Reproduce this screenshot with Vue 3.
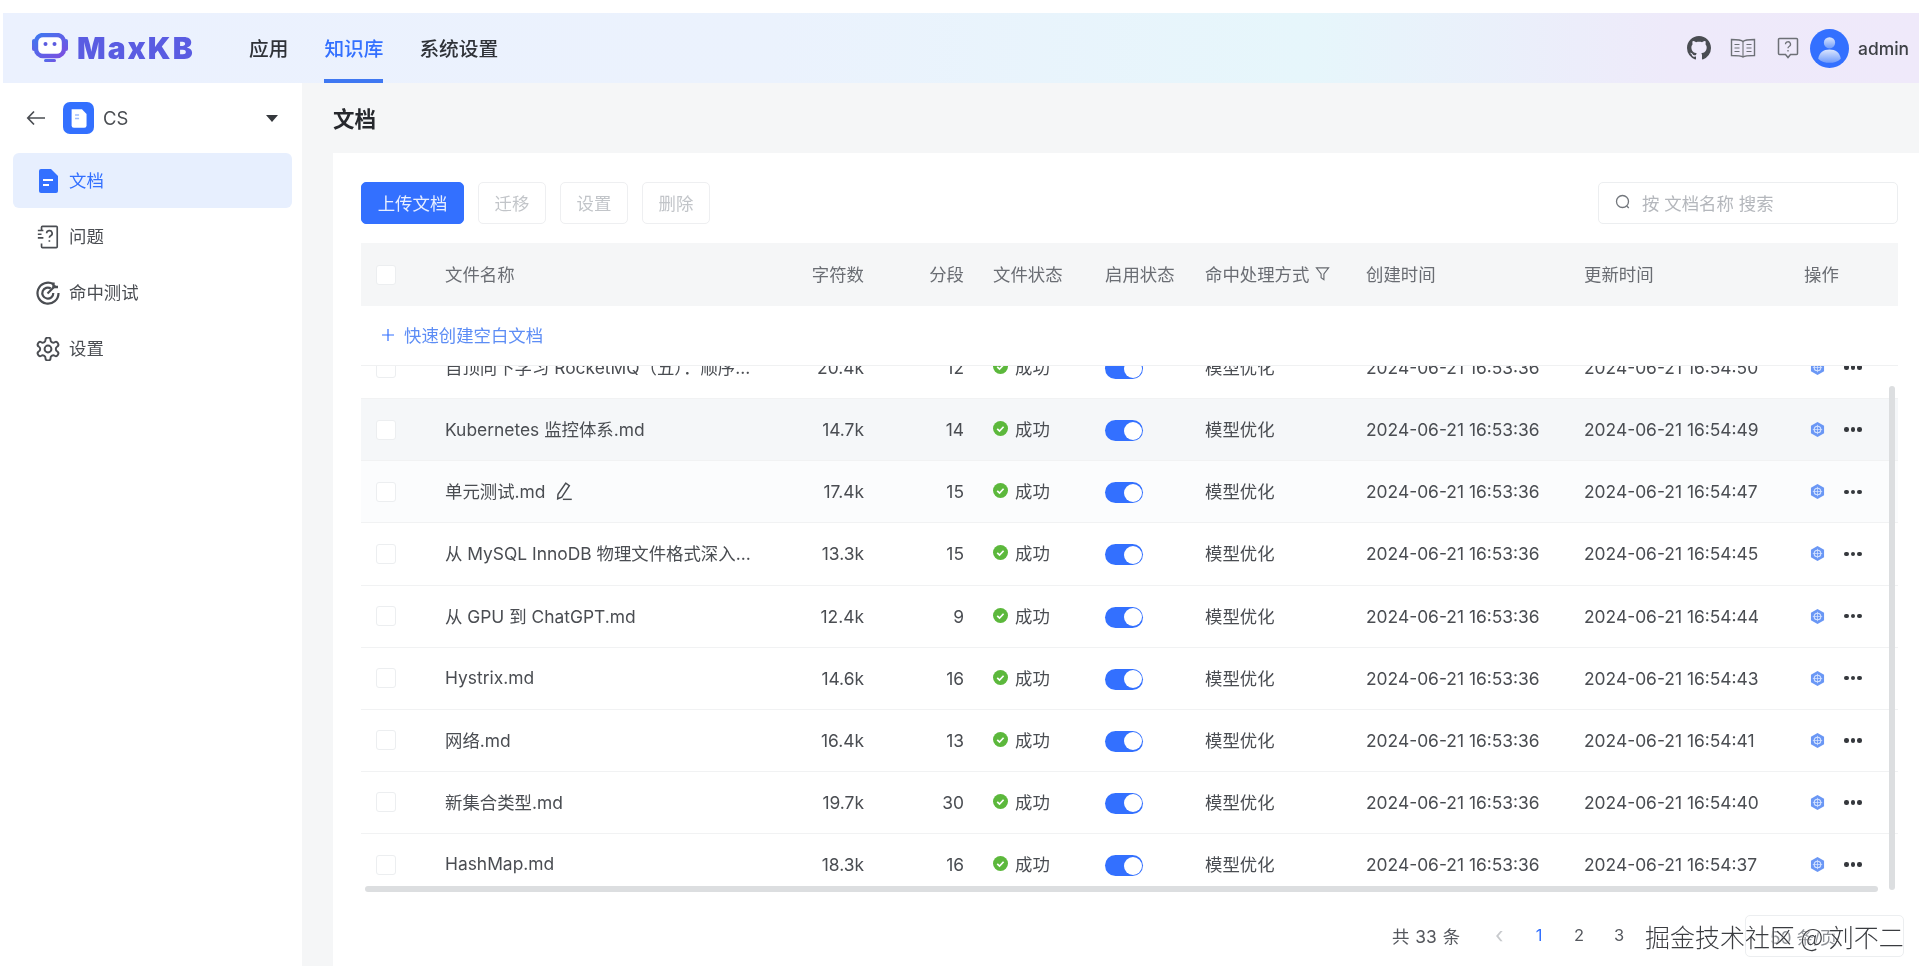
<script setup>
const rows = [
  { name: '自顶向下学习 RocketMQ（五）：顺序消息.md', chars: '20.4k', seg: 12, updated: '2024-06-21 16:54:50' },
  { name: 'Kubernetes 监控体系.md', chars: '14.7k', seg: 14, updated: '2024-06-21 16:54:49', hover: true },
  { name: '单元测试.md', chars: '17.4k', seg: 15, updated: '2024-06-21 16:54:47', edit: true, soft: true },
  { name: '从 MySQL InnoDB 物理文件格式深入理解索引.md', chars: '13.3k', seg: 15, updated: '2024-06-21 16:54:45' },
  { name: '从 GPU 到 ChatGPT.md', chars: '12.4k', seg: 9, updated: '2024-06-21 16:54:44' },
  { name: 'Hystrix.md', chars: '14.6k', seg: 16, updated: '2024-06-21 16:54:43' },
  { name: '网络.md', chars: '16.4k', seg: 13, updated: '2024-06-21 16:54:41' },
  { name: '新集合类型.md', chars: '19.7k', seg: 30, updated: '2024-06-21 16:54:40' },
  { name: 'HashMap.md', chars: '18.3k', seg: 16, updated: '2024-06-21 16:54:37' }
]
</script>

<template>
  <div class="page">
    <header class="topbar">
      <div class="brand">
        <svg class="logo" viewBox="0 0 38 30" fill="none">
          <defs>
            <linearGradient id="lg" x1="0" y1="0" x2="1" y2="1">
              <stop offset="0" stop-color="#3f78f0" />
              <stop offset="1" stop-color="#7a4fe0" />
            </linearGradient>
          </defs>
          <rect x="1" y="6" width="4" height="12" rx="2" fill="url(#lg)" />
          <rect x="33" y="6" width="4" height="12" rx="2" fill="url(#lg)" />
          <rect x="5" y="2" width="28" height="21" rx="7" stroke="url(#lg)" stroke-width="4.4" fill="#fff" />
          <circle cx="14.5" cy="11" r="2" fill="#5b5be0" />
          <circle cx="23.5" cy="11" r="2" fill="#5b5be0" />
          <rect x="13" y="26" width="12" height="3" rx="1.5" fill="url(#lg)" />
        </svg>
        <span class="brand-name">MaxKB</span>
      </div>
      <nav class="nav">
        <a class="nav-item">应用</a>
        <a class="nav-item active">知识库</a>
        <a class="nav-item">系统设置</a>
      </nav>
      <div class="top-right">
        <svg class="ic-github" viewBox="0 0 16 16" fill="#4a4d52">
          <path d="M8 0c4.42 0 8 3.58 8 8a8.013 8.013 0 0 1-5.45 7.59c-.4.08-.55-.17-.55-.38 0-.27.01-1.13.01-2.2 0-.75-.25-1.23-.54-1.48 1.78-.2 3.65-.88 3.65-3.95 0-.88-.31-1.59-.82-2.15.08-.2.36-1.02-.08-2.12 0 0-.67-.22-2.2.82-.64-.18-1.32-.27-2-.27-.68 0-1.36.09-2 .27-1.53-1.03-2.2-.82-2.2-.82-.44 1.1-.16 1.92-.08 2.12-.51.56-.82 1.28-.82 2.15 0 3.06 1.86 3.75 3.64 3.95-.23.2-.44.55-.51 1.07-.46.21-1.61.55-2.33-.66-.15-.24-.6-.83-1.23-.82-.67.01-.27.38.01.53.34.19.73.9.82 1.13.16.45.68 1.31 2.69.94 0 .67.01 1.3.01 1.49 0 .21-.15.45-.55.38A7.995 7.995 0 0 1 0 8c0-4.42 3.58-8 8-8Z" />
        </svg>
        <svg class="ic-book" viewBox="0 0 26 20" fill="none" stroke="#6d7076" stroke-width="1.4">
          <path d="M13 3.500C11.500 2 9 1.500 1.500 1.500v16c7 0 10 .3 11.500 1.500 1.500-1.200 4.500-1.500 11.500-1.500v-16C17 1.500 14.500 2 13 3.500Z" />
          <path d="M13 3.500V19M4.500 6.500h5M4.500 10h5M4.500 13.500h5M16.500 6.500h5M16.500 10h5M16.500 13.500h5" stroke-width="1.100" />
        </svg>
        <svg class="ic-help" viewBox="0 0 22 22" fill="none" stroke="#6d7076" stroke-width="1.500">
          <path d="M2.500 1.500h17a1 1 0 0 1 1 1v14a1 1 0 0 1-1 1h-6L11 20.500 8.500 17.500h-6a1 1 0 0 1-1-1v-14a1 1 0 0 1 1-1Z" />
          <path d="M8.500 7.300a2.500 2.500 0 1 1 3.600 2.200c-.8.400-1.100.900-1.100 1.800M11 13v1.400" stroke-width="1.300" />
        </svg>
        <svg class="avatar" viewBox="0 0 38 38">
          <defs>
            <linearGradient id="ab" x1="0" y1="0" x2="0" y2="1">
              <stop offset="0" stop-color="#dbe6fd" />
              <stop offset="1" stop-color="#6f9bfb" />
            </linearGradient>
          </defs>
          <circle cx="19" cy="19" r="19" fill="#3370ff" />
          <circle cx="19" cy="13.500" r="5.500" fill="url(#ab)" />
          <path d="M8 29c1-6 5-9 11-9s10 3 11 9c-3 3-7 4-11 4s-8-1-11-4Z" fill="url(#ab)" />
        </svg>
        <span class="user">admin</span>
      </div>
    </header>

    <div class="body">
      <aside class="sidebar">
        <div class="kb-head">
          <svg class="ic-back" viewBox="0 0 20 16" fill="none" stroke="#4a4d52" stroke-width="1.700">
            <path d="M19 8H2M8 1.500 1.800 8 8 14.500" />
          </svg>
          <span class="kb-icon">
            <svg viewBox="0 0 20 20">
              <path d="M4 2h9l4 4v10a2 2 0 0 1-2 2H6a2 2 0 0 1-2-2Z" fill="#fff" />
              <path d="M7 7h3.500M7 10h3.500" stroke="#9dbcff" stroke-width="1.300" />
            </svg>
          </span>
          <span class="kb-name">CS</span>
          <span class="caret"></span>
        </div>
        <a class="side-item on">
          <svg class="side-ic" viewBox="0 0 24 24">
            <path d="M5 0h10l7 7v15a2 2 0 0 1-2 2H5a2 2 0 0 1-2-2V2a2 2 0 0 1 2-2Z" fill="#3370ff" />
            <path d="M7 11h10M7 16h6" stroke="#fff" stroke-width="2" />
          </svg>
          <span>文档</span>
        </a>
        <a class="side-item">
          <svg class="side-ic" viewBox="0 0 24 26" fill="none" stroke="#4a4d52" stroke-width="1.800">
            <path d="M5 6V2.500a1 1 0 0 1 1-1h15a1 1 0 0 1 1 1v21a1 1 0 0 1-1 1H6a1 1 0 0 1-1-1V20" />
            <path d="M1 6h6M1 10h4M1 14h6" />
            <path d="M10.500 9a3 3 0 1 1 4.400 2.700c-1 .5-1.400 1.100-1.400 2.100M13.500 16.500v1.600" />
          </svg>
          <span>问题</span>
        </a>
        <a class="side-item">
          <svg class="side-ic" viewBox="0 0 24 24" fill="none" stroke="#4a4d52" stroke-width="2.200">
            <path d="M17.500 3.200A10.500 10.500 0 1 0 22.500 12" />
            <path d="M14.800 7.500A5.500 5.500 0 1 0 17.300 12" />
            <path d="M11.500 12.500 19.500 4.500" />
            <path d="M17.500 1.500v4.500h4.500" stroke-width="2.400" />
          </svg>
          <span>命中测试</span>
        </a>
        <a class="side-item">
          <svg class="side-ic" viewBox="1.500 1.500 21 21" fill="none" stroke="#4a4d52" stroke-width="1.700">
            <path d="M12.220 2h-.44a2 2 0 0 0-2 2v.18a2 2 0 0 1-1 1.730l-.43.25a2 2 0 0 1-2 0l-.15-.08a2 2 0 0 0-2.730.73l-.22.38a2 2 0 0 0 .73 2.730l.15.1a2 2 0 0 1 1 1.720v.51a2 2 0 0 1-1 1.740l-.15.09a2 2 0 0 0-.73 2.730l.22.38a2 2 0 0 0 2.730.73l.15-.08a2 2 0 0 1 2 0l.43.25a2 2 0 0 1 1 1.730V20a2 2 0 0 0 2 2h.44a2 2 0 0 0 2-2v-.18a2 2 0 0 1 1-1.730l.43-.25a2 2 0 0 1 2 0l.15.08a2 2 0 0 0 2.730-.73l.22-.39a2 2 0 0 0-.73-2.730l-.15-.08a2 2 0 0 1-1-1.740v-.5a2 2 0 0 1 1-1.740l.15-.09a2 2 0 0 0 .73-2.730l-.22-.38a2 2 0 0 0-2.730-.73l-.15.08a2 2 0 0 1-2 0l-.43-.25a2 2 0 0 1-1-1.730V4a2 2 0 0 0-2-2z" />
            <circle cx="12" cy="12" r="3" />
          </svg>
          <span>设置</span>
        </a>
      </aside>

      <main class="main">
        <h1 class="title">文档</h1>
        <section class="card">
          <div class="toolbar">
            <button class="btn primary">上传文档</button>
            <button class="btn">迁移</button>
            <button class="btn">设置</button>
            <button class="btn">删除</button>
            <div class="search">
              <svg viewBox="0 0 16 16" fill="none" stroke="#72767c" stroke-width="1.300">
                <circle cx="7.500" cy="7.500" r="6" />
                <path d="m11.800 12 2 2" />
              </svg>
              <span>按 文档名称 搜索</span>
            </div>
          </div>

          <div class="grid thead">
            <span class="cell"><i class="check"></i></span>
            <span class="cell">文件名称</span>
            <span class="cell end">字符数</span>
            <span class="cell end">分段</span>
            <span class="cell status-col">文件状态</span>
            <span class="cell">启用状态</span>
            <span class="cell"><span>命中处理方式</span><svg class="filter" viewBox="0 0 16 16" fill="none" stroke="#65686e" stroke-width="1.200"><path d="M1.500 2h13L9.500 8.500v6l-3-2v-4Z" /></svg></span>
            <span class="cell">创建时间</span>
            <span class="cell">更新时间</span>
            <span class="cell">操作</span>
          </div>

          <div class="quick">
            <svg viewBox="0 0 14 14" fill="none" stroke="#3370ff" stroke-width="1.200"><path d="M7 1v12M1 7h12" /></svg>
            <span>快速创建空白文档</span>
          </div>

          <div class="scroller">
            <div class="rows">
              <div v-for="r in rows" :key="r.name" class="grid row" :class="{ hover: r.hover, soft: r.soft }">
                <span class="cell"><i class="check"></i></span>
                <span class="cell name">
                  <span class="ellipsis">{{ r.name }}</span>
                  <svg v-if="r.edit" class="edit" viewBox="0 0 18 18" fill="none" stroke="#4a4d52" stroke-width="1.300">
                    <path d="M10.500 2 13.800 4.200 7 14.500 3.300 16 3.600 12Z" />
                    <path d="M8 16.500h8" />
                  </svg>
                </span>
                <span class="cell end num">{{ r.chars }}</span>
                <span class="cell end num">{{ r.seg }}</span>
                <span class="cell status-col">
                  <svg class="ok" viewBox="0 0 16 16">
                    <circle cx="8" cy="8" r="8" fill="#5cb83c" />
                    <path d="m4.500 8.300 2.500 2.400 4.300-4.600" fill="none" stroke="#fff" stroke-width="1.800" />
                  </svg>
                  <span>成功</span>
                </span>
                <span class="cell"><i class="switch"></i></span>
                <span class="cell">模型优化</span>
                <span class="cell num">2024-06-21 16:53:36</span>
                <span class="cell num">{{ r.updated }}</span>
                <span class="cell ops">
                  <svg class="hex" viewBox="0 0 16 16">
                    <path d="M8 0 15 4v8l-7 4-7-4V4Z" fill="#6a97f5" />
                    <circle cx="8" cy="8" r="3.500" fill="none" stroke="#d5e3ff" stroke-width="1.200" />
                    <path d="M8 3v10M3 8h10" stroke="#d5e3ff" stroke-width=".8" />
                  </svg>
                  <span class="dots"><i></i><i></i><i></i></span>
                </span>
              </div>
            </div>
            <div class="bar-h"></div>
            <div class="bar-v"></div>
          </div>

          <div class="pager">
            <span class="total">共 33 条</span>
            <span class="prev">‹</span>
            <span class="pg cur">1</span>
            <span class="pg">2</span>
            <span class="pg">3</span>
            <span class="size">50 条/页</span>
          </div>
        </section>
      </main>
    </div>
    <div class="watermark">掘金技术社区 @ 刘不二</div>
  </div>
</template>

<style>
html, body { margin: 0; background: #fff; }
</style>

<style scoped>
.page {
  box-sizing: border-box;
  width: 1932px;
  height: 978px;
  padding: 13px 13px 12px 3px;
  display: flex;
  flex-direction: column;
  position: relative;
  overflow: hidden;
  background: #fff;
  color: #4a4d52;
  font-family: Inter, "Noto Sans CJK SC", sans-serif;
  font-size: 17.4px;
  filter: blur(0.55px);
}
.topbar {
  height: 70px;
  flex: none;
  display: flex;
  align-items: center;
  padding-left: 28px;
  background: linear-gradient(90deg, #ebf1fe 0%, #ebf2fd 40%, #e6f6fb 68%, #eeeafa 87%, #efe9fa 100%);
}
.brand { display: flex; align-items: center; width: 218px; }
.logo { width: 38px; height: 30px; }
.brand-name {
  margin-left: 8px;
  font-family: Inter, sans-serif;
  font-weight: 900;
  font-size: 30px;
  letter-spacing: 2px;
  color: #5a5ce2;
}
.nav { display: flex; gap: 36px; height: 100%; }
.nav-item {
  display: flex;
  align-items: center;
  height: 100%;
  box-sizing: border-box;
  font-size: 19.7px;
  font-weight: 500;
  color: #2f3238;
  border-bottom: 4px solid transparent;
  padding-top: 2px;
}
.nav-item.active { color: #3370ff; border-bottom-color: #3f78f2; }
.top-right { margin-left: auto; display: flex; align-items: center; padding-right: 10px; }
.ic-github { width: 24px; height: 24px; margin-right: 19px; }
.ic-book { width: 26px; height: 20px; margin-right: 21px; }
.ic-help { width: 22px; height: 22px; margin-right: 11px; }
.avatar { width: 39px; height: 39px; margin-right: 9px; }
.user { font-size: 17.4px; font-weight: 500; color: #3d4045; }

.body { flex: 1; display: flex; min-height: 0; }
.sidebar { width: 299px; flex: none; background: #fff; padding: 0 10px; box-sizing: border-box; }
.kb-head { height: 70px; display: flex; align-items: center; padding-left: 13px; }
.ic-back { width: 20px; height: 16px; margin-right: 17px; }
.kb-icon {
  width: 31px; height: 32px;
  border-radius: 7px;
  background: #3370ff;
  display: flex; align-items: center; justify-content: center;
  margin-right: 9px;
}
.kb-icon svg { width: 23px; height: 23px; }
.kb-name { font-size: 18.5px; color: #4a4d52; }
.caret {
  margin-left: auto;
  margin-right: 14px;
  border-left: 6px solid transparent;
  border-right: 6px solid transparent;
  border-top: 7px solid #35383d;
}
.side-item {
  height: 55px;
  margin-bottom: 1px;
  width: 279px;
  display: flex;
  align-items: center;
  box-sizing: border-box;
  padding-left: 23px;
  border-radius: 6px;
  color: #4a4d52;
}
.side-item span { padding-bottom: 2px; }
.side-item.on { background: #e7effe; color: #3370ff; }
.side-ic { width: 24px; height: 24px; margin-right: 9px; flex: none; }

.main { flex: 1; min-width: 0; background: #f5f6f7; padding-left: 31px; display: flex; flex-direction: column; }
.title {
  margin: 0;
  height: 70px;
  flex: none;
  box-sizing: border-box;
  padding-bottom: 2px;
  display: flex;
  align-items: center;
  font-size: 21.5px;
  font-weight: 600;
  color: #26282d;
}
.card {
  flex: 1;
  min-height: 0;
  background: #fff;
  padding: 29px 21px 0 28px;
  display: flex;
  flex-direction: column;
}
.toolbar { display: flex; align-items: center; gap: 14px; height: 42px; margin-bottom: 19px; flex: none; }
.btn {
  height: 42px;
  width: 68px;
  padding: 0 0 2px;
  background: #fff;
  border: 1px solid #eeeff1;
  border-radius: 5px;
  color: #c2c5c9;
  font: inherit;
}
.btn.primary { width: 103px; background: #3370ff; border-color: #3370ff; color: #e8efff; }
.search {
  margin-left: auto;
  width: 300px;
  height: 42px;
  box-sizing: border-box;
  border: 1px solid #eceef0;
  border-radius: 5px;
  display: flex;
  align-items: center;
  padding: 0 0 2px 16px;
  color: #b4b7bc;
}
.search svg { width: 16px; height: 16px; margin-right: 11px; }

.grid {
  display: grid;
  grid-template-columns: 84px 314px 105px 100px 141px 100px 161px 218px 220px 94px;
  align-items: center;
}
.cell { display: flex; align-items: center; min-width: 0; white-space: pre; padding-bottom: 2px; }
.cell.num { padding-bottom: 0; }
.cell:first-child { padding-left: 15px; padding-bottom: 0; }
.end { justify-content: flex-end; }
.status-col { padding-left: 29px; }
.thead { height: 63px; background: #f5f6f7; flex: none; color: #6a6d73; }
.check {
  display: block;
  width: 20px; height: 20px;
  box-sizing: border-box;
  background: #fff;
  border: 1px solid #eceef0;
  border-radius: 3px;
}
.filter { width: 15px; height: 15px; margin-left: 6px; }
.quick {
  height: 59px;
  flex: none;
  box-sizing: border-box;
  padding: 0 0 2px 20px;
  display: flex;
  align-items: center;
  color: #5d8df5;
  gap: 9px;
}
.quick svg { width: 14px; height: 14px; }
.scroller { position: relative; height: 527px; flex: none; overflow: hidden; border-top: 1px solid #f0f1f2; box-sizing: border-box; }
.rows { margin-top: -29px; }
.row { height: 62.14px; box-sizing: border-box; border-bottom: 1px solid #f1f2f3; }
.row.hover { background: #f5f7f9; }
.row.soft { background: #fbfcfd; }
.name { padding-right: 4px; }
.ellipsis { overflow: hidden; text-overflow: ellipsis; }
.edit { width: 20px; height: 20px; margin-left: 9px; flex: none; }
.ok { width: 15px; height: 15px; margin-right: 7px; flex: none; }
.switch {
  display: block;
  width: 38px; height: 21px;
  margin-top: 4px;
  border-radius: 11px;
  background: #3370ff;
  position: relative;
}
.switch::after {
  content: "";
  position: absolute;
  right: 1px; top: 1.500px;
  width: 18px; height: 18px;
  border-radius: 50%;
  background: #fff;
}
.ops { padding-left: 6px; padding-bottom: 0; }
.hex { width: 15px; height: 15px; }
.dots { display: flex; gap: 2px; margin-left: 19px; }
.dots i { width: 4.500px; height: 4.500px; border-radius: 50%; background: #35383d; }
.bar-h { position: absolute; left: 4px; right: 20px; bottom: 0; height: 6px; border-radius: 3px; background: #dcdee0; }
.bar-v { position: absolute; right: 3px; top: 20px; bottom: 2px; width: 6px; border-radius: 3px; background: #dcdee0; }

.pager { flex: 1; display: flex; align-items: center; color: #55585e; position: relative; padding-top: 12px; }
.total { margin-left: 1031px; width: 103px; word-spacing: 1px; }
.prev { color: #c8cacd; font-size: 22px; width: 24px; line-height: 1; }
.pg { width: 40px; text-align: center; font-size: 16.500px; }
.pg.cur { color: #3370ff; }
.size {
  position: absolute;
  right: -6px;
  top: 23px;
  width: 159px;
  height: 42px;
  box-sizing: border-box;
  border: 1px solid #eceef0;
  border-radius: 5px;
  display: flex;
  align-items: center;
  padding-left: 24px;
  color: #8b8e93;
}
.watermark {
  position: absolute;
  left: 1645px;
  top: 918px;
  font-size: 25px;
  line-height: 36px;
  white-space: nowrap;
  color: #3a3c40;
  font-family: "Noto Sans CJK SC", sans-serif;
  font-weight: 300;
  text-shadow: 0 0 2px #fff, 0 0 2px #fff;
}
</style>
